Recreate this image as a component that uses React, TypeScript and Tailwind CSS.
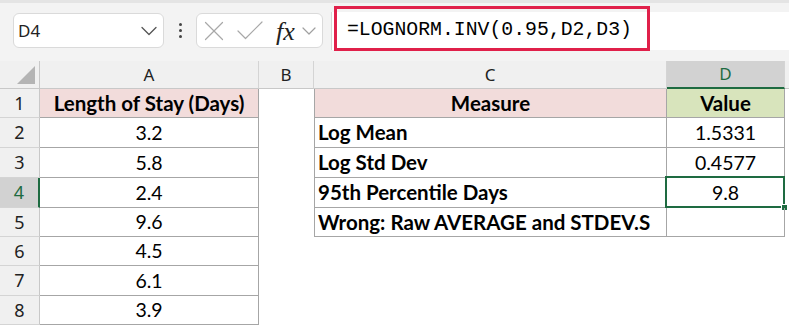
import { ChevronDown, X, Check } from "lucide-react"

const rowHeights = [29, 30, 30, 30, 29, 29, 30, 29]
const colA = ["Length of Stay (Days)", "3.2", "5.8", "2.4", "9.6", "4.5", "6.1", "3.9"]
const tableC = [
    ["Measure", "Value"],
    ["Log Mean", "1.5331"],
    ["Log Std Dev", "0.4577"],
    ["95th Percentile Days", "9.8"],
    ["Wrong: Raw AVERAGE and STDEV.S", ""],
]

const cellFont = "font-['Lato','Noto_Sans',sans-serif] text-black"

function ColHeader({ label, width, active }: { label: string; width: string; active?: boolean }) {
    return (
        <div
            className={`${width} flex items-center justify-center border-r border-[#d4d4d4] font-['Noto_Sans',sans-serif] text-[17px] ${
                active ? "bg-[#d2d2d2] text-[#1e6b41] border-b-2 border-b-[#1e6b41]" : "bg-[#f0f0f0] text-[#222] border-b border-b-[#c8c8c8]"
            }`}
        >
            {label}
        </div>
    )
}

export default function App() {
    return (
        <div className="w-[789px] h-[328px] overflow-hidden bg-white">
            {/* formula bar */}
            <div className="h-[61px] bg-[#f3f3f3] border-t-[3px] border-[#e4e4e4] flex items-start pt-[10px]">
                <div className="ml-[13px] w-[151px] h-[35px] bg-white border border-[#dadada] rounded-[6px] flex items-center justify-between pl-[4px] pr-[0px]">
                    <span className="font-['Noto_Sans',sans-serif] text-[17px] text-[#222]">D4</span>
                    <ChevronDown className="w-[28px] h-[28px] text-[#555]" strokeWidth={1.1} />
                </div>
                <div className="w-[32px] h-[35px] flex flex-col items-center justify-center gap-[3px]">
                    <span className="w-[3px] h-[3px] rounded-full bg-[#444]" />
                    <span className="w-[3px] h-[3px] rounded-full bg-[#444]" />
                    <span className="w-[3px] h-[3px] rounded-full bg-[#444]" />
                </div>
                <div className="w-[127px] h-[35px] bg-white border border-[#dadada] rounded-[6px] flex items-center pl-0 pr-0">
                    <X className="w-[34px] h-[34px] text-[#a8a8a8]" strokeWidth={0.85} />
                    <Check className="ml-[1px] w-[36px] h-[36px] text-[#a8a8a8]" strokeWidth={0.8} />
                    <span className="ml-[8px] mt-[2px] font-['Liberation_Serif',serif] italic text-[26px] leading-none text-[#222]">fx</span>
                    <ChevronDown className="ml-[2px] w-[24px] h-[24px] text-[#a0a0a0]" strokeWidth={1.2} />
                </div>
                <div className="ml-[8px] flex-1 h-[38px] mt-[-1px] bg-white border-l border-[#d6d6d6] relative flex items-center pl-[15px]">
                    <span className="font-['Liberation_Mono',monospace] text-[19.8px] text-black">=LOGNORM.INV(0.95,D2,D3)</span>
                    <div className="absolute left-[2px] top-[-6px] w-[316px] h-[45px] border-[3px] border-[#e0204a]" />
                </div>
            </div>

            {/* column headers */}
            <div className="flex h-[28px]">
                <div className="w-[40px] bg-[#f0f0f0] border-r border-b border-[#c8c8c8] relative">
                    <svg className="absolute right-[4px] bottom-[4px]" width="18" height="18" viewBox="0 0 18 18">
                        <polygon points="18,0 18,18 0,18" fill="#b4b4b4" />
                    </svg>
                </div>
                <ColHeader label="A" width="w-[219px]" />
                <ColHeader label="B" width="w-[55px]" />
                <ColHeader label="C" width="w-[353px]" />
                <ColHeader label="D" width="w-[118px]" active />
                <div className="flex-1 bg-[#f0f0f0] border-b border-[#c8c8c8]" />
            </div>

            {/* rows */}
            {rowHeights.map((h, i) => {
                const t = tableC[i]
                const active = i === 3
                return (
                    <div key={i} className="flex" style={{ height: h }}>
                        <div
                            className={`w-[40px] flex items-center justify-center font-['Noto_Sans',sans-serif] text-[18px] border-b border-[#d4d4d4] ${
                                active ? "bg-[#d2d2d2] text-[#1e6b41] border-r-2 border-r-[#1e6b41]" : "bg-[#f0f0f0] text-[#222] border-r border-r-[#c8c8c8]"
                            }`}
                        >
                            {i + 1}
                        </div>
                        <div
                            className={`w-[219px] flex items-center justify-center border-r border-b border-[#a6a6a6] ${cellFont} ${
                                i === 0 ? "bg-[#f2dcdb] font-bold text-[20.5px]" : "text-[19.5px]"
                            }`}
                        >
                            {colA[i]}
                        </div>
                        <div className="w-[55px]" />
                        {t ? (
                            <>
                                <div
                                    className={`w-[353px] flex items-center border-l border-r border-b border-[#a6a6a6] ${cellFont} font-bold text-[20.5px] ${
                                        i === 0 ? "bg-[#f2dcdb] justify-center" : "pl-[3px]"
                                    }`}
                                >
                                    {t[0]}
                                </div>
                                <div
                                    className={`w-[118px] relative flex items-center justify-center border-r border-b border-[#a6a6a6] ${cellFont} ${
                                        i === 0 ? "bg-[#d8e4bc] font-bold text-[20.5px]" : "text-[19.5px]"
                                    }`}
                                >
                                    {t[1]}
                                    {active && (
                                        <>
                                            <div className="absolute left-[-2px] top-[-2px] right-[-1px] bottom-[-1px] border-2 border-[#1e6b41]" />
                                            <div className="absolute right-[-4px] bottom-[-4px] w-[7px] h-[7px] bg-[#1e6b41] border border-white" />
                                        </>
                                    )}
                                </div>
                            </>
                        ) : null}
                    </div>
                )
            })}
        </div>
    )
}
